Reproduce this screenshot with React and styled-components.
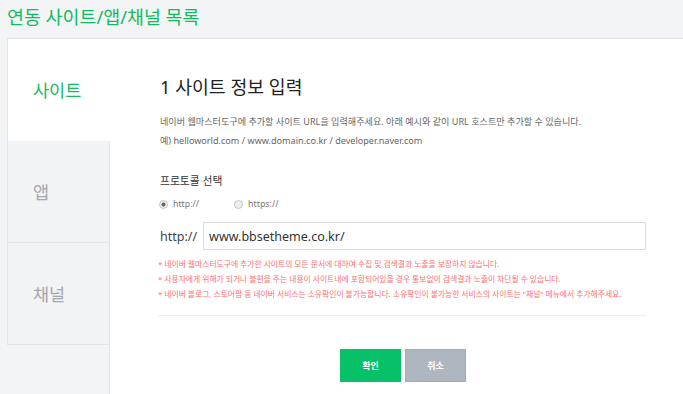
import styled, { createGlobalStyle } from "styled-components";

const GlobalStyle = createGlobalStyle`
  html, body {
    margin: 0;
    padding: 0;
    background: #f3f4f6;
    overflow: hidden;
  }
  body {
    font-family: "Noto Sans", "Noto Sans CJK KR", sans-serif;
  }
`;

const GREEN = "#12bb62";

const tabs = ["사이트", "앱", "채널"];

const notices = [
  "* 네이버 웹마스터도구에 추가한 사이트의 모든 문서에 대하여 수집 및 검색결과 노출을 보장하지 않습니다.",
  "* 사용자에게 위해가 되거나 불편을 주는 내용이 사이트내에 포함되어있을 경우 통보없이 검색결과 노출이 차단될 수 있습니다.",
  '* 네이버 블로그, 스토어팜 등 네이버 서비스는 소유확인이 불가능합니다. 소유확인이 불가능한 서비스의 사이트는 "채널" 메뉴에서 추가해주세요.',
];

export default function App() {
  return (
    <Page>
      <GlobalStyle />
      <PageTitle>연동 사이트/앱/채널 목록</PageTitle>
      <Panel>
        <Sidebar>
          {tabs.map((t, i) => (
            <Tab key={t} active={i === 0}>
              {t}
            </Tab>
          ))}
          <SidebarFill />
        </Sidebar>
        <Content>
          <Form>
            <Heading>1 사이트 정보 입력</Heading>
            <Desc>
              네이버 웹마스터도구에 추가할 사이트 URL을 입력해주세요. 아래 예시와 같이 URL 호스트만 추가할 수 있습니다.
              <br />
              예) helloworld.com / www.domain.co.kr / developer.naver.com
            </Desc>
            <Label>프로토콜 선택</Label>
            <RadioRow>
              <Radio>
                <Dot checked />
                http://
              </Radio>
              <Radio>
                <Dot />
                https://
              </Radio>
            </RadioRow>
            <UrlRow>
              <Prefix>http://</Prefix>
              <UrlInput defaultValue="www.bbsetheme.co.kr/" />
            </UrlRow>
            <Notices>
              {notices.map((n) => (
                <li key={n}>{n}</li>
              ))}
            </Notices>
            <Divider />
            <Buttons>
              <Button primary>확인</Button>
              <Button>취소</Button>
            </Buttons>
          </Form>
        </Content>
      </Panel>
    </Page>
  );
}

const Page = styled.div`
  padding-left: 7px;
  height: 394px;
  display: flex;
  flex-direction: column;
`;

const PageTitle = styled.h1`
  margin: 0;
  height: 38px;
  line-height: 34px;
  font-size: 18.4px;
  font-weight: 400;
  color: ${GREEN};
  flex-shrink: 0;
  white-space: nowrap;
`;

const Panel = styled.div`
  flex: 1;
  display: flex;
  border-top: 1px solid #e2e4e7;
  border-left: 1px solid #e2e4e7;
`;

const Sidebar = styled.div`
  width: 102px;
  display: flex;
  flex-direction: column;
  flex-shrink: 0;
`;

const Tab = styled.div`
  height: 102px;
  box-sizing: border-box;
  display: flex;
  align-items: center;
  padding-left: 25px;
  font-size: 17.5px;
  color: ${({ active }) => (active ? GREEN : "#a4a7ab")};
  background: ${({ active }) => (active ? "#fff" : "#f2f3f5")};
  border-right: 1px solid ${({ active }) => (active ? "#fff" : "#e2e4e7")};
  border-bottom: 1px solid ${({ active }) => (active ? "#fff" : "#e2e4e7")};
`;

const SidebarFill = styled.div`
  flex: 1;
  margin-left: -1px;
  background: #f3f4f6;
  border-right: 1px solid #e2e4e7;
`;

const Content = styled.div`
  flex: 1;
  background: #fff;
  padding: 36px 0 0 50px;
`;

const Form = styled.div`
  width: 486px;
`;

const Heading = styled.h2`
  margin: 0;
  font-size: 18.3px;
  line-height: 24px;
  font-weight: 400;
  color: #222;
  white-space: nowrap;
`;

const Desc = styled.p`
  margin: 13px 0 0;
  font-size: 9.1px;
  line-height: 19px;
  color: #666;
  white-space: nowrap;
`;

const Label = styled.div`
  margin-top: 23px;
  font-size: 10.8px;
  line-height: 16px;
  color: #333;
`;

const RadioRow = styled.div`
  margin-top: 7px;
  height: 16px;
  display: flex;
  align-items: center;
  gap: 36px;
`;

const Radio = styled.label`
  display: flex;
  align-items: center;
  gap: 5px;
  font-size: 8.8px;
  color: #777;
`;

const Dot = styled.span`
  width: 7px;
  height: 7px;
  margin-left: -1px;
  border-radius: 50%;
  border: 1px solid #c4c4c4;
  background: ${({ checked }) =>
    checked ? "radial-gradient(circle, #666 0 1.8px, #eee 2.3px)" : "#eee"};
`;

const UrlRow = styled.div`
  margin-top: 10px;
  display: flex;
  align-items: center;
  gap: 6px;
`;

const Prefix = styled.span`
  font-size: 12.5px;
  color: #444;
`;

const UrlInput = styled.input`
  flex: 1;
  height: 28px;
  box-sizing: border-box;
  border: 1px solid #dcdcdc;
  padding: 0 5px;
  font-family: inherit;
  font-size: 12.5px;
  color: #333;
  outline: none;
`;

const Notices = styled.ul`
  list-style: none;
  margin: 7px 0 0 -2px;
  padding: 0;
  font-size: 7.8px;
  line-height: 15px;
  color: #ff6f6f;
  white-space: nowrap;
`;

const Divider = styled.hr`
  margin: 13px 0 0 -2px;
  border: 0;
  border-top: 1px solid #eeeeee;
`;

const Buttons = styled.div`
  margin-top: 33px;
  display: flex;
  justify-content: center;
  gap: 4px;
`;

const Button = styled.button`
  width: 61px;
  height: 33px;
  box-sizing: border-box;
  border: 1px solid ${({ primary }) => (primary ? "#06c167" : "#a3abb4")};
  background: ${({ primary }) => (primary ? "#06c167" : "#aeb6bf")};
  color: #fff;
  font-family: inherit;
  font-size: 9px;
  font-weight: 700;
  padding: 0;
`;
